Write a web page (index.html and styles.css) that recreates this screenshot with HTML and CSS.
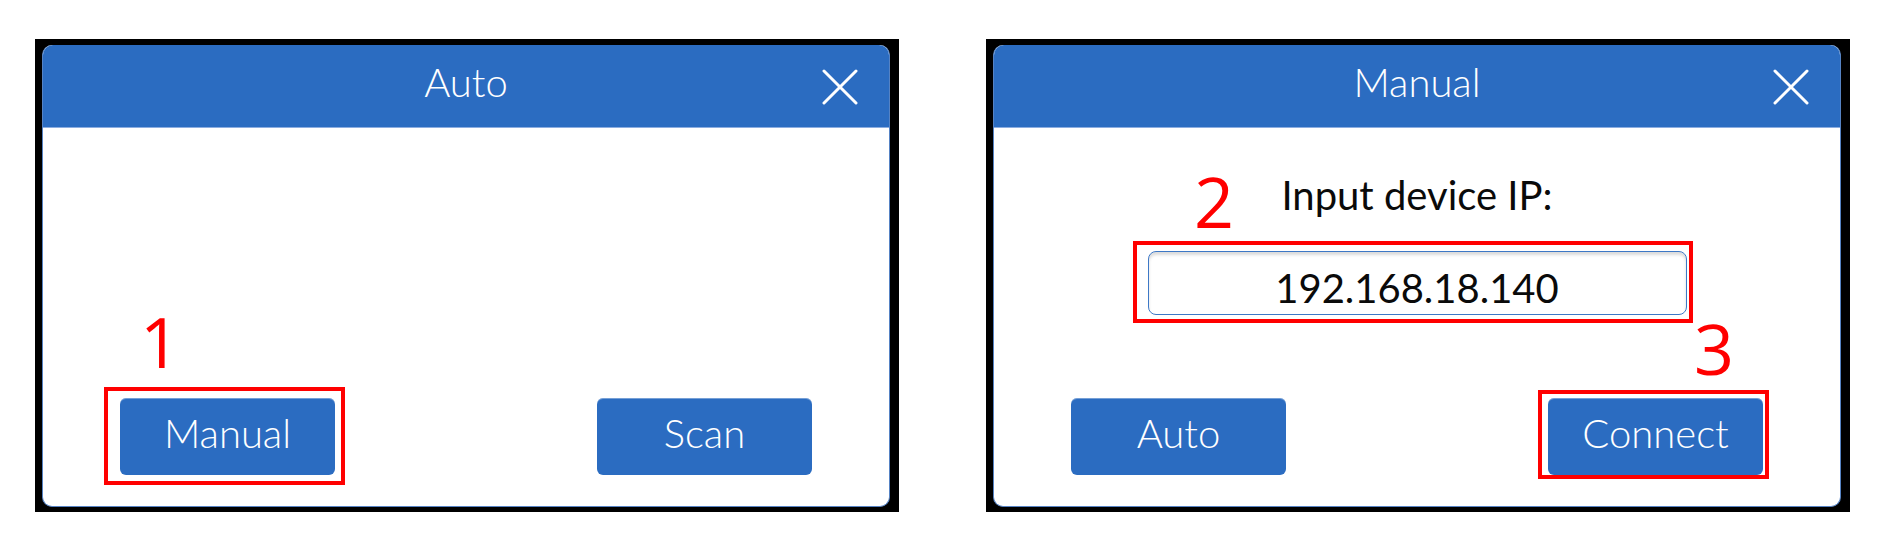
FILE: index.html
```html
<!DOCTYPE html>
<html lang="en">
<head>
<meta charset="utf-8">
<title>Connection dialogs</title>
<link rel="stylesheet" href="styles.css">
</head>
<body>
<div class="stage">
  <div class="frame">
    <div class="dialog">
      <div class="header">
        <span class="title">Auto</span>
        <svg class="close" viewBox="0 0 36 36" width="36" height="36"><path d="M2 2 L34 34 M34 2 L2 34" stroke="#fff" stroke-width="3" stroke-linecap="round" fill="none"/></svg>
      </div>
      <div class="body">
        <div class="footer">
          <div class="btn">Manual</div>
          <div class="btn">Scan</div>
        </div>
      </div>
      <span class="num n1">1</span>
      <span class="mark m1"></span>
    </div>
  </div>
  <div class="frame">
    <div class="dialog">
      <div class="header">
        <span class="title">Manual</span>
        <svg class="close" viewBox="0 0 36 36" width="36" height="36"><path d="M2 2 L34 34 M34 2 L2 34" stroke="#fff" stroke-width="3" stroke-linecap="round" fill="none"/></svg>
      </div>
      <div class="body">
        <div class="label">Input device IP:</div>
        <div class="ip">192.168.18.140</div>
        <div class="footer">
          <div class="btn">Auto</div>
          <div class="btn">Connect</div>
        </div>
      </div>
      <span class="num n2">2</span>
      <span class="mark m2"></span>
      <span class="num n3">3</span>
      <span class="mark m3"></span>
    </div>
  </div>
</div>
</body>
</html>
```
FILE: styles.css
```css
html, body {
  margin: 0;
  padding: 0;
  background: #ffffff;
}
body {
  font-family: "Lato", "Liberation Sans", sans-serif;
  font-weight: 300;
}
.stage {
  display: flex;
  gap: 87px;
  padding: 39px 0 0 35px;
}
.frame {
  background: #000000;
  padding: 6px 9px 5px 7px;
  width: 848px;
}
.dialog {
  position: relative;
  box-sizing: border-box;
  width: 848px;
  height: 462px;
  background: #ffffff;
  border: 1px solid #5683c4;
  border-top: 0;
  border-radius: 10px;
  display: flex;
  flex-direction: column;
}
.header {
  box-sizing: border-box;
  height: 83px;
  background: #2b6cc1;
  border-bottom: 1px solid #8cade0;
  border-radius: 10px 10px 0 0;
  display: grid;
  grid-template-columns: 1fr auto 1fr;
  padding: 13px 31px 0;
  align-items: start;
}
.title {
  grid-column: 2;
  color: #ffffff;
  font-size: 40px;
  line-height: 48px;
}
.close {
  grid-column: 3;
  justify-self: end;
  margin-top: 11px;
}
.body {
  flex: 1;
  display: flex;
  flex-direction: column;
  align-items: center;
  padding: 0 77px 31px;
}
.label {
  margin-top: 43px;
  font-size: 40px;
  font-weight: 400;
  line-height: 48px;
  color: #0a0a0a;
}
.ip {
  box-sizing: border-box;
  margin-top: 32px;
  width: 539px;
  height: 64px;
  padding-top: 12px;
  border: 1px solid #3d78c6;
  border-radius: 8px;
  box-shadow: inset 0 3px 3px rgba(0, 0, 0, 0.14);
  text-align: center;
  font-size: 40px;
  font-weight: 400;
  line-height: 48px;
  color: #0a0a0a;
}
.footer {
  margin-top: auto;
  align-self: stretch;
  display: flex;
  justify-content: space-between;
}
.btn {
  box-sizing: border-box;
  width: 215px;
  height: 77px;
  background: #2b6cc1;
  border-radius: 6px;
  box-shadow: inset 0 1px 0 rgba(255, 255, 255, 0.35);
  color: #ffffff;
  font-size: 40px;
  line-height: 48px;
  display: flex;
  align-items: center;
  justify-content: center;
  padding-bottom: 8px;
}
.num {
  position: absolute;
  font-family: "Open Sans", "Noto Sans", sans-serif;
  font-weight: 400;
  font-size: 70px;
  line-height: 70px;
  color: #ff0000;
}
.n1 { left: 97px; top: 261px; }
.n2 { left: 200px; top: 121px; }
.n3 { left: 700px; top: 268px; }
.mark {
  position: absolute;
  box-sizing: border-box;
  border: 4px solid #ff0000;
}
.m1 { left: 61px; top: 342px; width: 241px; height: 98px; }
.m2 { left: 139px; top: 196px; width: 560px; height: 82px; }
.m3 { left: 544px; top: 345px; width: 231px; height: 89px; }
```
